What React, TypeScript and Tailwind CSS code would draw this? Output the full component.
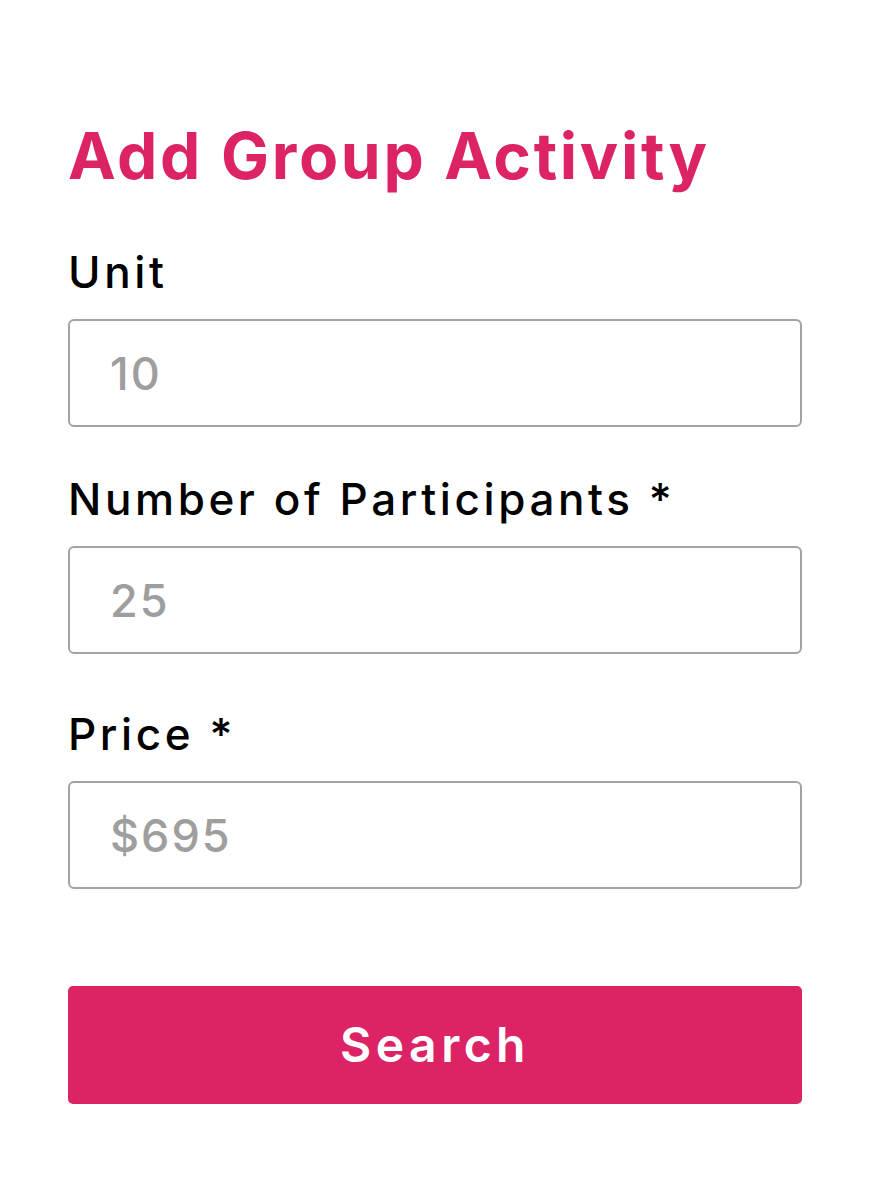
import React from "react";

const fields = [
  { label: "Unit", value: "10", gap: "mt-0" },
  { label: "Number of Participants *", value: "25", gap: "mt-[50px]" },
  { label: "Price *", value: "$695", gap: "mt-[58px]" },
];

export default function App() {
  return (
    <div className="min-h-[1200px] w-full bg-white font-['Inter',sans-serif]">
      <div className="w-[734px] ml-[68px] pt-[124px]">
        <h1 className="text-[64px] leading-none font-bold tracking-[2.7px] text-[#dc2366]">
          Add Group Activity
        </h1>

        <form className="mt-[62px] flex flex-col" onSubmit={(e) => e.preventDefault()}>
          {fields.map((f) => (
            <div key={f.label} className={f.gap}>
              <label className="block text-[44px] leading-none font-medium tracking-[3.6px] text-black">
                {f.label}
              </label>
              <input
                readOnly
                placeholder={f.value}
                className="mt-[25px] w-full h-[108px] rounded-[6px] border-2 border-[#a3a3a3] pl-[40px] text-[45px] tracking-[2px] text-[#9e9e9e] placeholder:text-[#9e9e9e] outline-none font-medium"
              />
            </div>
          ))}

          <button
            type="submit"
            className="mt-[97px] w-full h-[118px] rounded-[5px] bg-[#dc2366] text-white text-[48px] font-semibold tracking-[4.5px]"
          >
            Search
          </button>
        </form>
      </div>
    </div>
  );
}
